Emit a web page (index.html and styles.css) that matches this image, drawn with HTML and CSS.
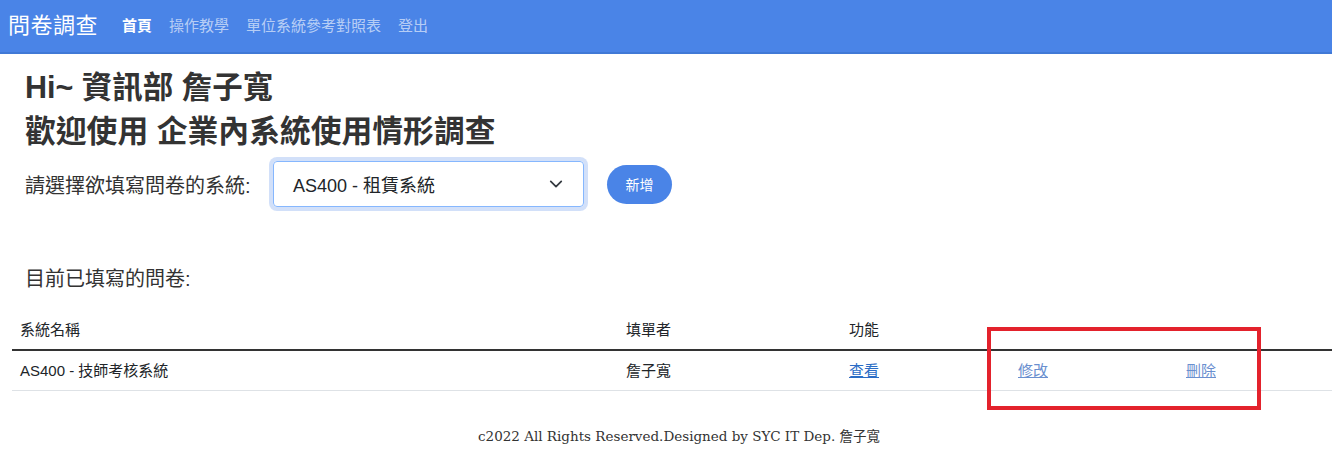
FILE: index.html
```html
<!DOCTYPE html>
<html lang="zh-Hant">
<head>
<meta charset="utf-8">
<title>問卷調查</title>
<link rel="stylesheet" href="styles.css">
</head>
<body>
<nav class="navbar">
  <span class="brand">問卷調查</span>
  <ul class="nav-links">
    <li><a class="nav-link active" href="#">首頁</a></li>
    <li><a class="nav-link" href="#">操作教學</a></li>
    <li><a class="nav-link" href="#">單位系統參考對照表</a></li>
    <li><a class="nav-link" href="#">登出</a></li>
  </ul>
</nav>
<main class="main">
  <section class="intro">
    <h1 class="greet">Hi~ 資訊部 詹子寬</h1>
    <h2 class="welcome">歡迎使用 企業內系統使用情形調查</h2>
    <div class="pick-row">
      <label class="pick-label">請選擇欲填寫問卷的系統:</label>
      <div class="select">
        <span class="select-value">AS400 - 租賃系統</span>
        <svg class="chevron" width="14" height="14" viewBox="0 0 16 16"><path d="M2 5l6 6 6-6" fill="none" stroke="#343a40" stroke-width="2" stroke-linecap="round" stroke-linejoin="round"/></svg>
      </div>
      <button class="btn-add">新增</button>
    </div>
    <p class="list-title">目前已填寫的問卷:</p>
  </section>
  <div class="table-wrap">
    <table class="table">
      <thead>
        <tr>
          <th class="c1">系統名稱</th>
          <th class="c2">填單者</th>
          <th class="c3">功能</th>
          <th class="c4"></th>
          <th class="c5"></th>
        </tr>
      </thead>
      <tbody>
        <tr>
          <td>AS400 - 技師考核系統</td>
          <td>詹子寬</td>
          <td><a class="link" href="#">查看</a></td>
          <td><a class="link light" href="#">修改</a></td>
          <td><a class="link light" href="#">刪除</a></td>
        </tr>
      </tbody>
    </table>
    <div class="highlight"></div>
  </div>
  <footer class="footer">c2022 All Rights Reserved.Designed by SYC IT Dep. 詹子寬</footer>
</main>
</body>
</html>
```
FILE: styles.css
```css
* { box-sizing: border-box; }
html, body { margin: 0; padding: 0; }
body {
  font-family: "Liberation Sans", "Noto Sans CJK TC", sans-serif;
  color: #212529;
  background: #fff;
  width: 1332px;
  overflow: hidden;
}
.navbar {
  height: 54px;
  background: #4a84e7;
  border-bottom: 2px solid #4079d6;
  display: flex;
  align-items: center;
  padding: 0 8px;
}
.brand {
  color: #fff;
  font-size: 22px;
  line-height: 30px;
  margin-right: 24px;
  letter-spacing: 0.5px;
}
.nav-links {
  list-style: none;
  display: flex;
  margin: 0;
  padding: 0;
  gap: 17px;
}
.nav-link {
  color: rgba(255,255,255,0.62);
  text-decoration: none;
  font-size: 15px;
  line-height: 20px;
}
.nav-link.active { color: #fff; font-weight: bold; }
.main { padding: 0 0 0 12px; }
.intro { padding-left: 13px; }
.greet {
  margin: 0;
  padding-top: 16px;
  font-size: 30.5px;
  line-height: 34px;
  font-weight: bold;
  color: #333;
}
.welcome {
  margin: 0;
  padding-top: 11px;
  font-size: 30.8px;
  line-height: 34px;
  font-weight: bold;
  color: #333;
}
.pick-row {
  display: flex;
  align-items: center;
  margin-top: 12px;
}
.pick-label {
  font-size: 20px;
  color: #333;
  width: 248px;
}
.select {
  width: 311px;
  height: 46px;
  border: 1px solid #86b7fe;
  border-radius: 4px;
  box-shadow: 0 0 0 4px rgba(74,132,231,0.25);
  display: flex;
  align-items: center;
  justify-content: space-between;
  padding: 0 20px 0 19px;
}
.select-value { font-size: 18px; color: #212529; }
.btn-add {
  margin-left: 23px;
  width: 65px;
  height: 39px;
  border: none;
  border-radius: 20px;
  background: #4a84e7;
  color: #fff;
  font-family: inherit;
  font-size: 14px;
}
.list-title {
  margin: 0;
  margin-top: 59px;
  font-size: 20px;
  line-height: 26px;
  color: #333;
}
.table-wrap { position: relative; margin-top: 18px; }
.table {
  border-collapse: collapse;
  width: 1340px;
  font-size: 15px;
  color: #212529;
}
.table th, .table td {
  text-align: left;
  padding: 8px;
  line-height: 23px;
  font-weight: normal;
}
.table thead th { border-bottom: 2px solid #333; }
.table tbody td { border-bottom: 1px solid #dee2e6; }
.c1 { width: 606px; }
.c2 { width: 223px; }
.c3 { width: 169px; }
.c4 { width: 168px; }
.link { color: #2c6dc5; text-decoration: underline; }
.link.light { color: #6a8fcf; }
.highlight {
  position: absolute;
  left: 975px;
  top: 17px;
  width: 274px;
  height: 83px;
  border: 4px solid #e3222c;
}
.footer {
  text-align: center;
  font-family: "DejaVu Serif", "Noto Sans CJK TC", serif;
  font-size: 13.5px;
  color: #333;
  margin-top: 34px;
  padding-left: 14px;
}
```
